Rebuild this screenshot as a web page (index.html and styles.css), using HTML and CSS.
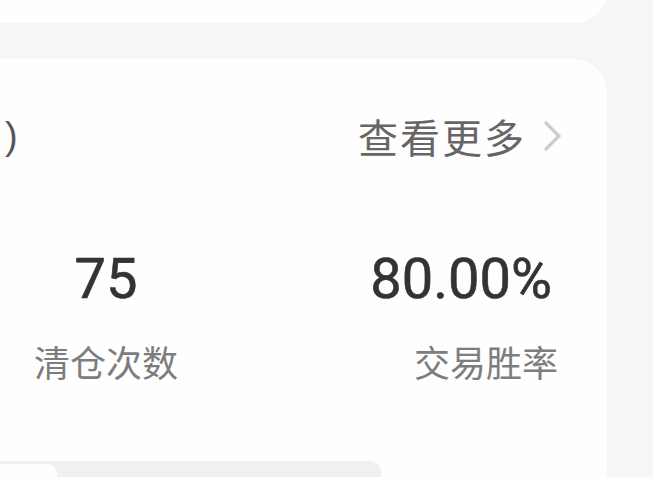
FILE: index.html
```html
<!DOCTYPE html>
<html lang="zh-CN">
<head>
<meta charset="utf-8">
<link rel="stylesheet" href="styles.css">
</head>
<body>
<div class="page">
  <div class="card card-top"></div>
  <div class="card card-main">
    <div class="header">
      <span class="title">)</span>
      <a class="more">查看更多<svg class="chev" viewBox="0 0 20 32" width="20" height="32"><path d="M3 2 L17 16 L3 30" fill="none" stroke="#cccccc" stroke-width="3.2"/></svg></a>
    </div>
    <div class="stats">
      <div class="stat stat-left">
        <div class="num">75</div>
        <div class="label">清仓次数</div>
      </div>
      <div class="stat stat-right">
        <div class="num num-pct">80.00%</div>
        <div class="label">交易胜率</div>
      </div>
    </div>
    <div class="segment">
      <div class="seg-item active"></div>
      <div class="seg-item"></div>
    </div>
  </div>
</div>
</body>
</html>
```
FILE: styles.css
```css
html, body {
  margin: 0;
  padding: 0;
  background: #f5f6f8;
  overflow: hidden;
  height: 477px;
}
body {
  font-family: "Noto Sans CJK SC", "Noto Sans", sans-serif;
}
.page {
  display: flex;
  flex-direction: column;
  gap: 36px;
  margin-top: -40px;
  margin-left: -40px;
  padding-right: 46px;
}
.card {
  background: #fefefe;
  border-radius: 34px;
}
.card-top {
  height: 63px;
}
.card-main {
  box-sizing: border-box;
  padding: 49px 45px 0 45px;
  height: 418px;
  overflow: hidden;
  border-radius: 34px 34px 0 0;
}
.header {
  display: flex;
  justify-content: space-between;
  align-items: center;
  height: 56px;
}
.title {
  font-family: "Liberation Sans", sans-serif;
  font-size: 38px;
  color: #555;
  line-height: 56px;
}
.more {
  display: flex;
  align-items: center;
  font-size: 40px;
  letter-spacing: 2px;
  color: #666;
  line-height: 56px;
}
.chev {
  margin-left: 16px;
  margin-top: 0;
}
.stats {
  display: flex;
  justify-content: space-between;
  margin-top: 85px;
}
.stat {
  display: flex;
  flex-direction: column;
  gap: 28px;
}
.stat-left {
  align-items: center;
  margin-left: 29px;
}
.stat-right {
  align-items: flex-end;
  margin-right: 4px;
}
.num {
  font-family: "Roboto", "Liberation Sans", sans-serif;
  font-weight: 400;
  font-size: 56px;
  line-height: 60px;
  color: #333;
  -webkit-text-stroke: 0.6px #333;
}
.num-pct {
  margin-right: 6px;
}
.label {
  font-size: 36px;
  line-height: 48px;
  color: #7d7d7d;
}
.segment {
  display: flex;
  margin-top: 76px;
  margin-left: -45px;
  width: 421px;
  height: 60px;
  background: #f0f0f2;
  border-radius: 12px;
  padding-top: 3px;
}
.seg-item {
  flex: 1;
}
.seg-item.active {
  flex: 0 0 97px;
  background: #fefefe;
  border-radius: 10px;
}
```
